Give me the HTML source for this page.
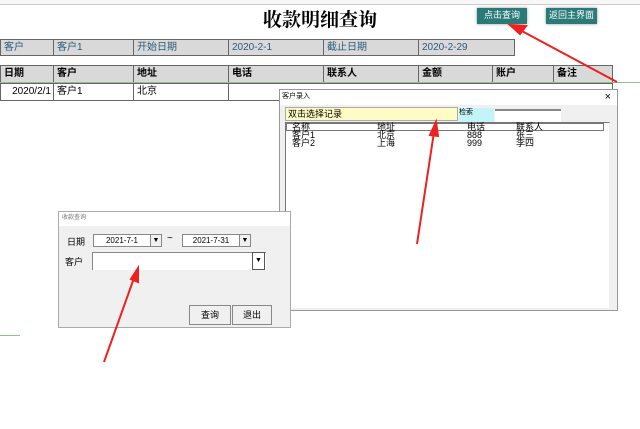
<!DOCTYPE html>
<html><head><meta charset="utf-8"><style>
*{margin:0;padding:0;box-sizing:border-box}
body{width:640px;height:429px;background:#fff;position:relative;overflow:hidden;font-family:"Liberation Sans","Noto Sans CJK SC",sans-serif;font-size:10px;color:#000}
.a{position:absolute}
.c{position:absolute;border:1px solid #666;background:#d9d9d9;padding-left:3px;line-height:15px;white-space:nowrap;overflow:hidden}
.g{color:#2c5b7a}
.h{font-weight:bold}
.btn{position:absolute;background:#2a7b78;color:#fff;text-align:center;font-size:9px;line-height:15px;box-shadow:0 0 3px #999}
</style></head><body>
<div class="a" style="left:0;top:0;width:640px;height:5px;border-bottom:1px solid #ccc;background:#f7f7f7"></div>
<div class="a" style="left:0;top:6px;width:640px;height:30px;text-align:center;font-family:'Noto Serif CJK SC',serif;font-size:19px;font-weight:bold;line-height:26px;padding-left:0">收款明细查询</div>
<div class="btn" style="left:477px;top:8px;width:50px;height:16px">点击查询</div>
<div class="btn" style="left:546px;top:8px;width:51px;height:16px">返回主界面</div>

<div class="c g" style="left:0;top:39px;width:54px;height:17px">客户</div>
<div class="c g" style="left:53px;top:39px;width:81px;height:17px">客户1</div>
<div class="c g" style="left:133px;top:39px;width:96px;height:17px">开始日期</div>
<div class="c g" style="left:228px;top:39px;width:96px;height:17px">2020-2-1</div>
<div class="c g" style="left:323px;top:39px;width:96px;height:17px">截止日期</div>
<div class="c g" style="left:418px;top:39px;width:97px;height:17px">2020-2-29</div>

<div class="c h" style="left:0;top:65px;width:54px;height:18px">日期</div>
<div class="c h" style="left:53px;top:65px;width:81px;height:18px">客户</div>
<div class="c h" style="left:133px;top:65px;width:96px;height:18px">地址</div>
<div class="c h" style="left:228px;top:65px;width:96px;height:18px">电话</div>
<div class="c h" style="left:323px;top:65px;width:96px;height:18px">联系人</div>
<div class="c h" style="left:418px;top:65px;width:75px;height:18px">金额</div>
<div class="c h" style="left:492px;top:65px;width:62px;height:18px">账户</div>
<div class="c h" style="left:553px;top:65px;width:60px;height:18px">备注</div>
<div class="a" style="left:0;top:82px;width:640px;height:1px;background:#8bc48b"></div>
<div class="c" style="left:0;top:83px;width:54px;height:18px;background:#fff;text-align:right;padding-right:2px">2020/2/1</div>
<div class="c" style="left:53px;top:83px;width:81px;height:18px;background:#fff">客户1</div>
<div class="c" style="left:133px;top:83px;width:96px;height:18px;background:#fff">北京</div>
<div class="c" style="left:228px;top:83px;width:385px;height:18px;background:#fff"></div>
<div class="a" style="left:0;top:335px;width:20px;height:1px;background:#8bc48b"></div>

<!-- customer dialog -->
<div class="a" style="left:279px;top:89px;width:339px;height:222px;background:#f0f0f0;border:1px solid #999">
 <div class="a" style="left:0;top:0;width:337px;height:15px;background:#fff;font-size:7px;line-height:14px;padding-left:2px">客户录入<span class="a" style="right:6px;top:0;font-size:11px">×</span></div>
 <div class="a" style="left:5px;top:17px;width:173px;height:14px;background:#fdfcc4;border:1px solid #aaa;font-size:9px;line-height:12px;padding-left:2px">双击选择记录</div>
 <div class="a" style="left:179px;top:18px;width:35px;height:14px;background:#c2f4f8;font-size:7px;line-height:9px">检索</div>
 <div class="a" style="left:215px;top:19px;width:66px;height:13px;background:#fff;border-top:2px solid #888"></div>
 <div class="a" style="left:5px;top:32px;width:325px;height:187px;background:#fff;border:1px solid #777;border-right-color:#eee;border-bottom-color:#eee">
  <div class="a" style="left:0;top:0;width:318px;height:8px;border:1px solid #777"></div>
  <div class="a" style="left:6px;top:0;line-height:8px;font-size:9px">名称<br>客户1<br>客户2</div>
  <div class="a" style="left:91px;top:0;line-height:8px;font-size:9px">地址<br>北京<br>上海</div>
  <div class="a" style="left:181px;top:0;line-height:8px;font-size:9px">电话<br>888<br>999</div>
  <div class="a" style="left:230px;top:0;line-height:8px;font-size:9px">联系人<br>张三<br>李四</div>
 </div>
</div>

<!-- query dialog -->
<div class="a" style="left:58px;top:211px;width:233px;height:117px;background:#f0f0f0;border:1px solid #aaa">
 <div class="a" style="left:0;top:0;width:231px;height:14px;background:#fff;font-size:6px;line-height:13px;padding-left:3px;color:#777">收款查询</div>
 <div class="a" style="left:8px;top:23px;font-size:9px">日期</div>
 <div class="a" style="left:34px;top:22px;width:58px;height:13px;background:#fff;border:1px solid #888;font-size:8px;text-align:center;line-height:11px">2021-7-1</div>
 <div class="a" style="left:91px;top:22px;width:12px;height:13px;border:1px solid #888;font-size:7px;text-align:center;line-height:11px">▼</div>
 <div class="a" style="left:108px;top:21px;font-size:10px">~</div>
 <div class="a" style="left:123px;top:22px;width:58px;height:13px;background:#fff;border:1px solid #888;font-size:8px;text-align:center;line-height:11px">2021-7-31</div>
 <div class="a" style="left:180px;top:22px;width:12px;height:13px;border:1px solid #888;font-size:7px;text-align:center;line-height:11px">▼</div>
 <div class="a" style="left:6px;top:43px;font-size:9px">客户</div>
 <div class="a" style="left:33px;top:40px;width:174px;height:18px;background:#fff;border-left:1px solid #888;border-top:1px solid #888"></div>
 <div class="a" style="left:193px;top:40px;width:13px;height:18px;border:1px solid #555;font-size:7px;text-align:center;line-height:16px">▼</div>
 <div class="a" style="left:130px;top:93px;width:42px;height:20px;border:1px solid #888;background:#f0f0f0;font-size:9px;text-align:center;line-height:18px">查询</div>
 <div class="a" style="left:173px;top:93px;width:40px;height:20px;border:1px solid #888;background:#f0f0f0;font-size:9px;text-align:center;line-height:18px">退出</div>
</div>

<svg class="a" style="left:0;top:0" width="640" height="429">
 <g stroke="#ee2020" stroke-width="2" fill="#ee2020">
  <line x1="617" y1="82" x2="520" y2="30"/><polygon points="510,25 526,26 520,34"/>
  <line x1="417" y1="244" x2="434" y2="132"/><polygon points="436,122 438,136 430,135"/>
  <line x1="104" y1="362" x2="134" y2="278"/><polygon points="138,268 138,282 131,279"/>
 </g>
</svg>
</body></html>
